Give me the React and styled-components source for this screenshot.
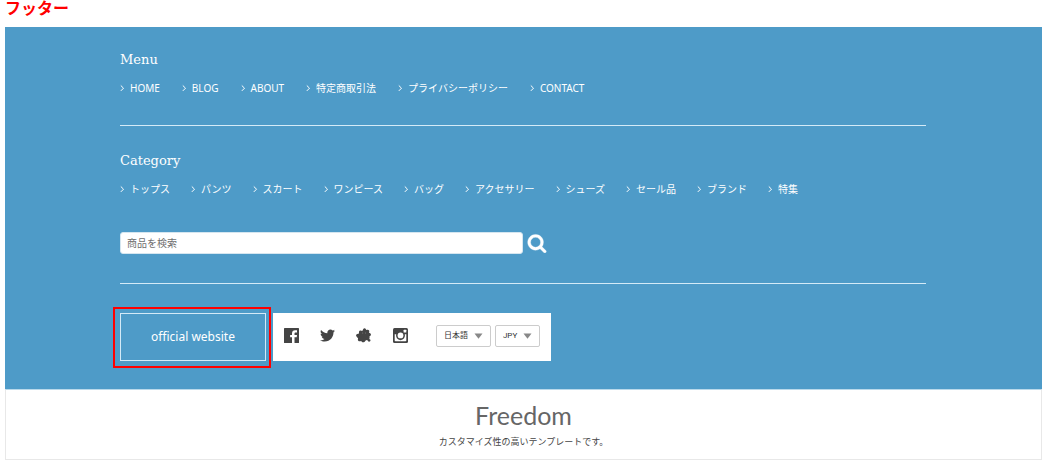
import React from "react";
import styled, { createGlobalStyle } from "styled-components";
import { FaTwitter } from "react-icons/fa";

const GlobalStyle = createGlobalStyle`
  * {
    box-sizing: border-box;
  }

  body {
    margin: 0;
    background: #fff;
    font-family: "Noto Sans", "Noto Sans CJK JP", sans-serif;
  }
`;

const Page = styled.main`
  padding: 0 4px 0 5px;
`;

const PageTitle = styled.h1`
  margin: 0;
  padding-bottom: 11px;
  color: #f00;
  font-family: "Noto Sans", "Noto Sans CJK JP", sans-serif;
  font-size: 16px;
  font-weight: 700;
  line-height: 16px;
`;

const Footer = styled.footer`
  background: #4e9bc8;
  color: #fff;
`;

const Inner = styled.div`
  padding: 23px 116px 21px 115px;
`;

const Section = styled.section`
  margin-bottom: ${props => props.$after}px;
  padding-bottom: 29px;
  border-bottom: 1px solid #d4eaf7;
`;

const Heading = styled.h2`
  margin: 0 0 10px;
  font-family: "DejaVu Serif", serif;
  font-size: 13px;
  font-weight: 400;
  line-height: 20px;
`;

const List = styled.ul`
  display: flex;
  flex-wrap: wrap;
  margin: 0;
  padding: 0;
  gap: 0 ${props => props.$gap}px;
  list-style: none;
`;

const NavLink = styled.a`
  display: flex;
  align-items: center;
  gap: 5px;
  color: #fff;
  font-size: 10px;
  line-height: 16px;
  white-space: nowrap;
  text-decoration: none;
`;

const Search = styled.form`
  display: flex;
  align-items: center;
  gap: 4px;
  margin-top: 35px;
`;

const SearchInput = styled.input`
  width: 50%;
  height: 22px;
  padding: 0 6px;
  border: 1px solid #d5e6f0;
  border-radius: 3px;
  background: #fff;
  font-family: inherit;
  font-size: 10px;

  &::placeholder {
    color: #6f6f6f;
    opacity: 1;
  }
`;

const SearchButton = styled.button`
  display: flex;
  padding: 0;
  border: 0;
  background: none;
  color: #fff;
`;

const Row = styled.div`
  display: flex;
  gap: 2px;
  margin-left: -7px;
`;

const Highlight = styled.div`
  padding: 4px 3px 5px 5px;
  border: 2px solid #f00;
`;

const SiteLink = styled.a`
  display: block;
  padding: 0 30px;
  border: 1px solid #d4eaf7;
  color: #fff;
  font-size: 12px;
  line-height: 46px;
  text-decoration: none;
`;

const Panel = styled.div`
  display: flex;
  align-items: center;
  gap: 28px;
  margin: 6px 0 7px;
  padding: 0 11px 3px;
  background: #fff;
`;

const Social = styled.div`
  display: flex;
  gap: 21px;
`;

const SocialLink = styled.a`
  display: flex;
  color: #444;
`;

const Selects = styled.div`
  display: flex;
  gap: 4px;
`;

const SelectBox = styled.div`
  position: relative;
  color: #888;

  svg {
    position: absolute;
    top: 8px;
    right: 8px;
    pointer-events: none;
  }
`;

const Select = styled.select`
  display: block;
  width: ${props => props.$width}px;
  height: 22px;
  padding: 0 7px;
  appearance: none;
  border: 1px solid #ccc;
  border-radius: 2px;
  background: #fff;
  color: #333;
  font-family: Roboto, "Noto Sans CJK JP", sans-serif;
  font-size: 8px;
`;

const Brand = styled.div`
  padding: 10px 0 9px;
  border: 1px solid #e8e8e8;
  border-top-color: #b9d9eb;
  text-align: center;
`;

const Logo = styled.a`
  display: block;
  color: #666;
  font-family: Lato, sans-serif;
  font-size: 25px;
  line-height: 30px;
  text-decoration: none;
`;

const Tagline = styled.p`
  margin: 4px 0 0;
  color: #444;
  font-size: 9px;
  line-height: 16px;
`;

const menu = ["HOME", "BLOG", "ABOUT", "特定商取引法", "プライバシーポリシー", "CONTACT"];

const categories = [
  "トップス",
  "パンツ",
  "スカート",
  "ワンピース",
  "バッグ",
  "アクセサリー",
  "シューズ",
  "セール品",
  "ブランド",
  "特集"
];

function Chevron() {
  return (
    <svg width="5" height="8" viewBox="0 0 5 8" fill="none" stroke="currentColor">
      <path d="M0.800 1.500 3.500 4.200 0.800 6.900" />
    </svg>
  );
}

function SearchIcon() {
  return (
    <svg
      width="20"
      height="20"
      viewBox="0 0 1792 1792"
      fill="currentColor"
      stroke="currentColor"
      strokeWidth="30"
    >
      <path d="M1216 832q0-185-131.5-316.5t-316.5-131.5-316.5 131.5-131.5 316.5 131.5 316.5 316.5 131.5 316.5-131.5 131.5-316.5zm512 832q0 52-38 90t-90 38q-54 0-90-38l-343-342q-179 124-399 124-143 0-273.5-55.5t-225-150-150-225-55.5-273.5 55.5-273.5 150-225 225-150 273.5-55.5 273.5 55.5 225 150 150 225 55.5 273.5q0 220-124 399l343 343q37 37 37 90z" />
    </svg>
  );
}

function FacebookIcon() {
  return (
    <svg width="15" height="15" viewBox="0 0 15 15">
      <rect width="15" height="15" rx="0.6" fill="currentColor" />
      <path
        fill="#fff"
        d="M8 15V9.3H6.1V7.1H8V5.5C8 3.5 9.2 2.3 11 2.3h2v2.2h-1.3c-.9 0-1.2.4-1.2 1.2v1.4H13l-.3 2.2h-2.2V15z"
      />
    </svg>
  );
}

function AmebaIcon() {
  return (
    <svg width="16" height="15" viewBox="0 0 16 15">
      <path
        fill="currentColor"
        d="M8.500.3C9.400.2 9.900 1 10.100 2.100c1.100-.3 2.500-.5 3 .4.400.8 0 1.600-.1 2.300 1.200.3 2 .9 1.900 1.900-.1.900-.9 1.500-1.600 2 .5.700.5 1.500-.1 2.200.7.100 1.300.6 1.300 1.400 0 .8-.6 1.400-1.400 1.400-.8 0-1.400-.6-1.500-1.400-.6 0-1.100-.1-1.600-.4-.5.900-1.200 2-2.300 2.300-1.200.3-2-.4-2.500-1.300-.9.500-2.200.7-2.900-.1-.6-.7-.5-1.700-.2-2.600C1.400 9.800.700 8.900.2 7.900-.2 6.900.3 6.200 1.300 5.900c.6-.2 1.200-.3 1.700-.4-.1-1.200 0-2.600 1.100-2.900.8-.2 1.600.2 2.200.5C6.800 2 7.400.5 8.500.3z"
      />
      <circle cx="6.800" cy="5" r="0.400" fill="#aaa" />
      <circle cx="9.600" cy="5" r="0.400" fill="#aaa" />
    </svg>
  );
}

function InstagramIcon() {
  return (
    <svg width="15" height="15" viewBox="0 0 15 15">
      <rect width="15" height="15" rx="1.500" fill="currentColor" />
      <path
        fill="#fff"
        d="M1.700 6.300H3.200a4.500 4.500 0 1 0 8.600 0h1.500v6.200c0 .5-.3.8-.8.8h-10c-.5 0-.8-.3-.8-.8z"
      />
      <circle cx="7.500" cy="7.400" r="2.900" fill="#fff" />
      <rect x="10.600" y="1.800" width="2.700" height="2.700" rx="0.500" fill="#fff" />
    </svg>
  );
}

function LinkList({ items, gap }) {
  return (
    <List $gap={gap}>
      {items.map(item => (
        <li key={item}>
          <NavLink href="#">
            <Chevron />
            {item}
          </NavLink>
        </li>
      ))}
    </List>
  );
}

function Dropdown({ label, value, width }) {
  return (
    <SelectBox>
      <Select aria-label={label} $width={width}>
        <option>{value}</option>
      </Select>
      <svg width="9" height="6" viewBox="0 0 9 6" fill="currentColor">
        <path d="M0.500 0.500h8L4.500 5.800z" />
      </svg>
    </SelectBox>
  );
}

export default function App() {
  return (
    <Page>
      <GlobalStyle />
      <PageTitle>フッター</PageTitle>
      <Footer>
        <Inner>
          <Section $after={25}>
            <Heading>Menu</Heading>
            <LinkList items={menu} gap={22} />
          </Section>
          <Section $after={23}>
            <Heading>Category</Heading>
            <LinkList items={categories} gap={21} />
            <Search onSubmit={e => e.preventDefault()}>
              <SearchInput type="text" aria-label="商品を検索" placeholder="商品を検索" />
              <SearchButton type="submit" aria-label="検索">
                <SearchIcon />
              </SearchButton>
            </Search>
          </Section>
          <Row>
            <Highlight>
              <SiteLink href="#">official website</SiteLink>
            </Highlight>
            <Panel>
              <Social>
                <SocialLink href="#" aria-label="Facebook">
                  <FacebookIcon />
                </SocialLink>
                <SocialLink href="#" aria-label="Twitter">
                  <FaTwitter size={15} />
                </SocialLink>
                <SocialLink href="#" aria-label="Ameba">
                  <AmebaIcon />
                </SocialLink>
                <SocialLink href="#" aria-label="Instagram">
                  <InstagramIcon />
                </SocialLink>
              </Social>
              <Selects>
                <Dropdown label="言語" value="日本語" width={55} />
                <Dropdown label="通貨" value="JPY" width={45} />
              </Selects>
            </Panel>
          </Row>
        </Inner>
      </Footer>
      <Brand>
        <Logo href="#">Freedom</Logo>
        <Tagline>カスタマイズ性の高いテンプレートです。</Tagline>
      </Brand>
    </Page>
  );
}
